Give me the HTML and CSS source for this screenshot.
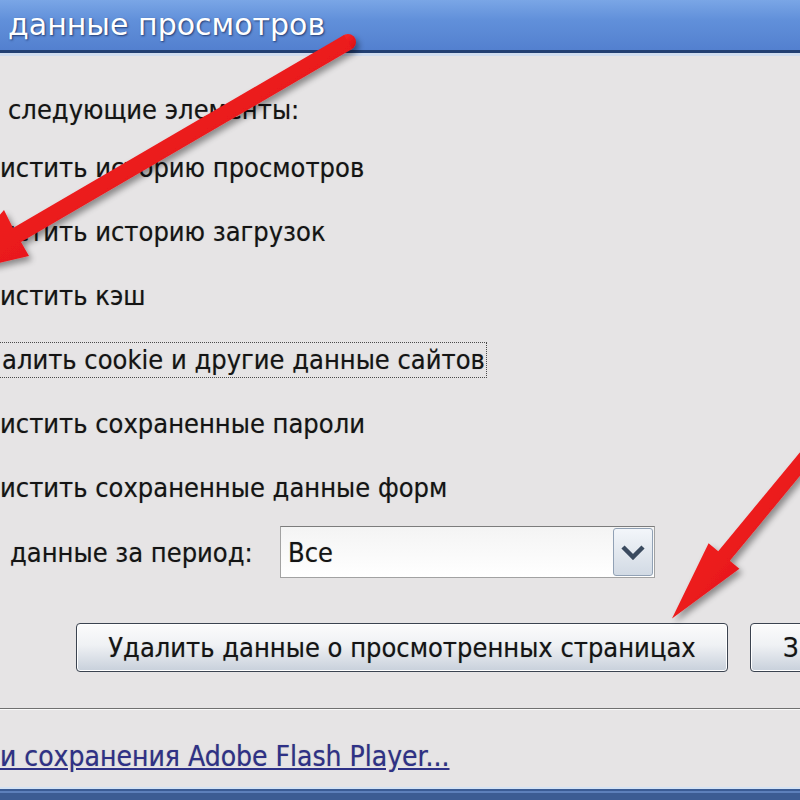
FILE: index.html
```html
<!DOCTYPE html>
<html lang="ru">
<head>
<meta charset="utf-8">
<title>Очистить данные просмотров</title>
<link rel="stylesheet" href="styles.css">
</head>
<body>
<div class="window">
  <div class="titlebar"><span class="title">данные просмотров</span></div>
  <div class="content">
    <div class="intro">следующие элементы:</div>
    <ul class="options">
      <li><span>истить историю просмотров</span></li>
      <li><span>истить историю загрузок</span></li>
      <li><span>истить кэш</span></li>
      <li><span class="focus">алить cookie и другие данные сайтов</span></li>
      <li><span>истить сохраненные пароли</span></li>
      <li><span>истить сохраненные данные форм</span></li>
    </ul>
    <div class="period">
      <span class="label">данные за период:</span>
      <div class="select">
        <span class="value">Все</span>
        <span class="drop"><svg width="24" height="16" viewBox="0 0 24 16"><path d="M2 3 L12 13 L22 3" fill="none" stroke="#3a4a5f" stroke-width="4.5"/></svg></span>
      </div>
    </div>
    <div class="buttons">
      <button class="btn main">Удалить данные о просмотренных страницах</button>
      <button class="btn close">З</button>
    </div>
  </div>
  <div class="separator"></div>
  <div class="footer"><a href="#">и сохранения Adobe Flash Player...</a></div>
  <div class="bottombar"></div>
</div>
<svg class="arrows" width="800" height="800" viewBox="0 0 800 800">
  <defs>
    <linearGradient id="red" x1="0" y1="0" x2="1" y2="1">
      <stop offset="0" stop-color="#ff2b2b"/>
      <stop offset="1" stop-color="#d80a10"/>
    </linearGradient>
    <filter id="sh" x="-20%" y="-20%" width="140%" height="140%">
      <feGaussianBlur in="SourceAlpha" stdDeviation="3"/>
      <feOffset dx="3" dy="4" result="o"/>
      <feComponentTransfer><feFuncA type="linear" slope="0.4"/></feComponentTransfer>
      <feMerge><feMergeNode/><feMergeNode in="SourceGraphic"/></feMerge>
    </filter>
  </defs>
  <g filter="url(#sh)" fill="url(#red)">
    <circle cx="348" cy="42" r="8"/>
    <polygon points="344,35 13,228 4,210 -52,275 29,256 21,242 352,49"/>
    <polygon points="826.9,419.7 718.2,551.2 708.6,543.2 672,618.5 739.4,568.8 729.8,560.8 838.5,429.3"/>
  </g>
</svg>
</body>
</html>
```

FILE: styles.css
```css
html, body {
  margin: 0;
  padding: 0;
}
body {
  width: 800px;
  height: 800px;
  overflow: hidden;
  position: relative;
  background: #e6e4e5;
  font-family: "DejaVu Sans Condensed", "Liberation Sans", sans-serif;
  color: #141414;
  text-shadow: 0 0 1px rgba(0, 0, 0, 0.35);
}
.window {
  height: 800px;
  display: flex;
  flex-direction: column;
}
.titlebar {
  height: 50px;
  flex: none;
  padding-left: 8px;
  background: linear-gradient(#7aa6e6, #6190da 40%, #5380cf);
  border-bottom: 3px solid #223f72;
  box-shadow: 0 3px 0 #cfdcef;
}
.title {
  font-family: "DejaVu Sans", sans-serif;
  font-size: 30px;
  line-height: 50px;
  color: #fff;
  text-shadow: 1px 1px 2px rgba(20, 40, 90, 0.8);
}
.content {
  padding-top: 28px;
}
.intro {
  height: 55px;
  line-height: 58px;
  padding-left: 8px;
  font-size: 27px;
}
.options {
  list-style: none;
  margin: 0;
  padding: 0;
}
.options li {
  height: 64px;
  display: flex;
  align-items: center;
  font-size: 27px;
  white-space: nowrap;
}
.options li span {
  line-height: 34px;
}
.options li .focus {
  display: inline-block;
  box-sizing: border-box;
  width: 488px;
  margin-left: -1px;
  padding-left: 2px;
  border: 1px dotted #4a4a4a;
  white-space: nowrap;
}
.period {
  height: 64px;
  display: flex;
  align-items: center;
  font-size: 27px;
}
.label {
  width: 270px;
  padding-left: 10px;
  flex: none;
}
.select {
  width: 375px;
  height: 52px;
  box-sizing: border-box;
  border: 1px solid #a2a2a2;
  border-top-color: #7c7c7c;
  background: linear-gradient(#f4f4f4, #ffffff);
  display: flex;
  align-items: center;
  justify-content: space-between;
  padding: 0 1px 0 7px;
}
.drop {
  width: 40px;
  height: 48px;
  box-sizing: border-box;
  border: 1px solid #91a1b5;
  border-radius: 3px;
  background: linear-gradient(#f3f6fa, #d2dae4);
  display: flex;
  align-items: center;
  justify-content: center;
}
.buttons {
  display: flex;
  gap: 22px;
  margin-top: 39px;
  padding-left: 76px;
}
.btn {
  height: 49px;
  flex: none;
  font-family: inherit;
  font-size: 27px;
  color: #141414;
  text-shadow: inherit;
  padding: 0;
  border: 1px solid #3b4350;
  border-radius: 4px;
  background: linear-gradient(#fcfcfc, #eff1f4 45%, #c8d0db);
  box-shadow: inset 0 0 0 1px #ffffff;
}
.btn.main {
  width: 652px;
}
.btn.close {
  width: 60px;
  text-align: left;
  padding-left: 32px;
}
.separator {
  margin-top: 36px;
  height: 1px;
  flex: none;
  background: #707070;
  border-bottom: 1px solid #fafafa;
}
.footer {
  flex: 1;
  padding-top: 32px;
  line-height: 30px;
}
.footer a {
  font-size: 28px;
  color: #2e3187;
  text-decoration: underline;
}
.bottombar {
  height: 13px;
  flex: none;
  background: linear-gradient(#d4e2f4 0 2px, #3a5b94 2px 4px, #5d80bb 4px 6px, #3c5c93 6px);
}
.arrows {
  position: absolute;
  left: 0;
  top: 0;
  pointer-events: none;
}
```
